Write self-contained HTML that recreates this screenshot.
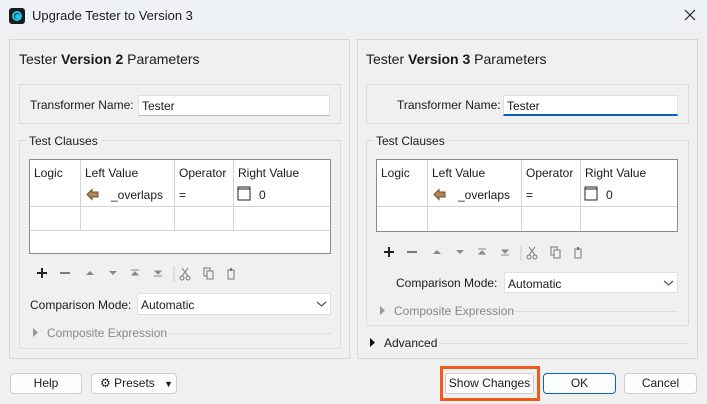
<!DOCTYPE html>
<html><head><style>
*{box-sizing:border-box;margin:0;padding:0}
body{width:707px;height:404px;background:#f0f0f0;font-family:"Liberation Sans",sans-serif;font-size:12px;color:#1a1a1a;position:relative;overflow:hidden}
.a{position:absolute}
.title{left:0;top:0;width:707px;height:31px;background:#eef1f6}
.panel{border:1px solid #d8d8d8;background:#f0f0f0}
.grp{border:1px solid #dcdcdc}
.inp{background:#fff;border:1px solid #e0e0e0;border-bottom:1px solid #999;padding:3px 3px;font-size:12px}
.tbl{background:#fff;border:1px solid #8a8a8a}
.vl{width:1px;background:#d4d4d4}
.hl{height:1px;background:#d4d4d4}
.btn{background:#fdfdfd;border:1px solid #cfcfcf;border-radius:4px;text-align:center;line-height:19px;font-size:12px}
.gl{color:#888}
</style></head><body>
<div class="a title"></div>
<div class="a" style="left:9px;top:8px;width:16px;height:16px;background:#1b1b1b;border-radius:3px"></div>
<div class="a" style="left:12px;top:11px;width:10px;height:10px;border:2px solid #1ec8e8;border-radius:50%"></div>
<div class="a" style="left:14.5px;top:13.5px;width:5px;height:5px;background:#1ec8e8;border-radius:50%"></div>
<div class="a" style="left:32px;top:8px;font-size:13px">Upgrade Tester to Version 3</div>
<svg class="a" style="left:684px;top:9px" width="12" height="12"><path d="M1 1L11 11M11 1L1 11" stroke="#222" stroke-width="1.2"/></svg>

<svg width="0" height="0" style="position:absolute"><defs>
<g id="tb">
<path d="M7 3V13M2 8H12" stroke="#222" stroke-width="2"/>
<path d="M25 8H35" stroke="#777" stroke-width="2"/>
<path d="M51 10L55 6L59 10Z" fill="#888"/>
<path d="M74 6L78 10L82 6Z" fill="#888"/>
<path d="M96 5H104M97 10L100 7L103 10Z" stroke="#888" fill="#888"/>
<path d="M119 11H127M120 6L123 9L126 6Z" stroke="#888" fill="#888"/>
<path d="M139 1V17" stroke="#ccc"/>
<path d="M147 3L153 11M153 3L147 11" stroke="#777"/><circle cx="147" cy="13" r="2" fill="none" stroke="#777"/><circle cx="153" cy="13" r="2" fill="none" stroke="#777"/>
<rect x="169" y="3" width="6" height="8" fill="none" stroke="#777"/><rect x="172" y="6" width="6" height="8" fill="#f0f0f0" stroke="#777"/>
<rect x="193" y="5" width="6" height="9" fill="none" stroke="#777"/><rect x="195" y="3" width="2" height="3" fill="#777"/>
</g>
<g id="ch"><path d="M1 1L5.5 5L10 1" fill="none" stroke="#555" stroke-width="1.2"/></g>
</defs></svg>

<!-- left panel -->
<div class="a panel" style="left:9px;top:39px;width:341px;height:320px"></div>
<div class="a" style="left:19px;top:51px;font-size:14px">Tester <b>Version 2</b> Parameters</div>
<div class="a grp" style="left:19px;top:84px;width:322px;height:40px"></div>
<div class="a" style="left:30px;top:98px">Transformer Name:</div>
<div class="a inp" style="left:138px;top:95px;width:192px;height:21px;border-bottom-color:#bbb">Tester</div>
<div class="a grp" style="left:19px;top:140px;width:322px;height:209px"></div>
<div class="a" style="left:26px;top:134px;background:#f0f0f0;padding:0 3px">Test Clauses</div>
<div class="a tbl" style="left:29px;top:159px;width:302px;height:95px"></div>
<div class="a vl" style="left:80px;top:160px;height:70px"></div>
<div class="a vl" style="left:174px;top:160px;height:70px"></div>
<div class="a vl" style="left:233px;top:160px;height:70px"></div>
<div class="a hl" style="left:30px;top:206px;width:300px"></div>
<div class="a hl" style="left:30px;top:230px;width:300px"></div>
<div class="a" style="left:34px;top:166px">Logic</div>
<div class="a" style="left:85px;top:166px">Left Value</div>
<div class="a" style="left:179px;top:166px">Operator</div>
<div class="a" style="left:238px;top:166px">Right Value</div>
<svg class="a" style="left:86px;top:188px" width="14" height="13"><path d="M1 6.5L6 1.5V4H12V9H6V11.5Z" fill="#b08850" stroke="#6a5030"/></svg>
<div class="a" style="left:111px;top:188px">_overlaps</div>
<div class="a" style="left:179px;top:188px">=</div>
<svg class="a" style="left:237px;top:186px" width="14" height="15"><rect x="1" y="1" width="12" height="13" fill="#fff" stroke="#222"/><line x1="1" y1="3" x2="13" y2="3" stroke="#222"/></svg>
<div class="a" style="left:259px;top:188px">0</div>
<svg class="a" style="left:35px;top:265px" width="210" height="18"><use href="#tb"/></svg>
<div class="a" style="left:30px;top:298px">Comparison Mode:</div>
<div class="a inp" style="left:137px;top:293px;width:194px;height:22px;border-bottom:1px solid #ddd;padding-top:4px">Automatic</div>
<svg class="a" style="left:316px;top:301px" width="12" height="8"><use href="#ch"/></svg>
<svg class="a" style="left:33px;top:328px" width="6" height="9"><path d="M0 0L5 4.5L0 9Z" fill="#999"/></svg>
<div class="a" style="left:47px;top:326px;color:#888">Composite Expression</div>
<div class="a hl" style="left:167px;top:333px;width:164px;background:#ddd"></div>

<!-- right panel -->
<div class="a panel" style="left:357px;top:39px;width:341px;height:320px"></div>
<div class="a" style="left:366px;top:51px;font-size:14px">Tester <b>Version 3</b> Parameters</div>
<div class="a grp" style="left:366px;top:84px;width:323px;height:40px"></div>
<div class="a" style="left:397px;top:98px">Transformer Name:</div>
<div class="a inp" style="left:503px;top:95px;width:175px;height:21px;border-bottom:2px solid #0a63c4">Tester</div>
<div class="a grp" style="left:366px;top:140px;width:323px;height:186px"></div>
<div class="a" style="left:373px;top:134px;background:#f0f0f0;padding:0 3px">Test Clauses</div>
<div class="a tbl" style="left:376px;top:159px;width:302px;height:73px"></div>
<div class="a vl" style="left:427px;top:160px;height:71px"></div>
<div class="a vl" style="left:521px;top:160px;height:71px"></div>
<div class="a vl" style="left:580px;top:160px;height:71px"></div>
<div class="a hl" style="left:377px;top:206px;width:300px"></div>
<div class="a" style="left:381px;top:166px">Logic</div>
<div class="a" style="left:432px;top:166px">Left Value</div>
<div class="a" style="left:526px;top:166px">Operator</div>
<div class="a" style="left:585px;top:166px">Right Value</div>
<svg class="a" style="left:433px;top:188px" width="14" height="13"><path d="M1 6.5L6 1.5V4H12V9H6V11.5Z" fill="#b08850" stroke="#6a5030"/></svg>
<div class="a" style="left:458px;top:188px">_overlaps</div>
<div class="a" style="left:526px;top:188px">=</div>
<svg class="a" style="left:584px;top:186px" width="14" height="15"><rect x="1" y="1" width="12" height="13" fill="#fff" stroke="#222"/><line x1="1" y1="3" x2="13" y2="3" stroke="#222"/></svg>
<div class="a" style="left:606px;top:188px">0</div>
<svg class="a" style="left:382px;top:244px" width="210" height="18"><use href="#tb"/></svg>
<div class="a" style="left:396px;top:276px">Comparison Mode:</div>
<div class="a inp" style="left:504px;top:272px;width:174px;height:21px;border-bottom:1px solid #ddd;padding-top:4px">Automatic</div>
<svg class="a" style="left:663px;top:280px" width="12" height="8"><use href="#ch"/></svg>
<svg class="a" style="left:380px;top:306px" width="6" height="9"><path d="M0 0L5 4.5L0 9Z" fill="#999"/></svg>
<div class="a" style="left:394px;top:304px;color:#888">Composite Expression</div>
<div class="a hl" style="left:514px;top:311px;width:164px;background:#ddd"></div>
<svg class="a" style="left:370px;top:338px" width="6" height="9"><path d="M0 0L5 4.5L0 9Z" fill="#111"/></svg>
<div class="a" style="left:384px;top:336px">Advanced</div>
<div class="a hl" style="left:439px;top:343px;width:249px;background:#ddd"></div>

<!-- buttons -->
<div class="a btn" style="left:10px;top:373px;width:72px;height:21px">Help</div>
<div class="a btn" style="left:91px;top:373px;width:86px;height:21px;text-align:left;padding-left:8px">⚙ Presets <span style="font-size:9px;margin-left:6px">▼</span></div>
<div class="a" style="left:440px;top:366px;width:100px;height:35px;border:3px solid #f05a1a"></div>
<div class="a btn" style="left:445px;top:373px;width:89px;height:21px;border-radius:2px">Show Changes</div>
<div class="a btn" style="left:543px;top:373px;width:73px;height:21px;border-color:#0a63c4">OK</div>
<div class="a btn" style="left:624px;top:373px;width:73px;height:21px">Cancel</div>
</body></html>
